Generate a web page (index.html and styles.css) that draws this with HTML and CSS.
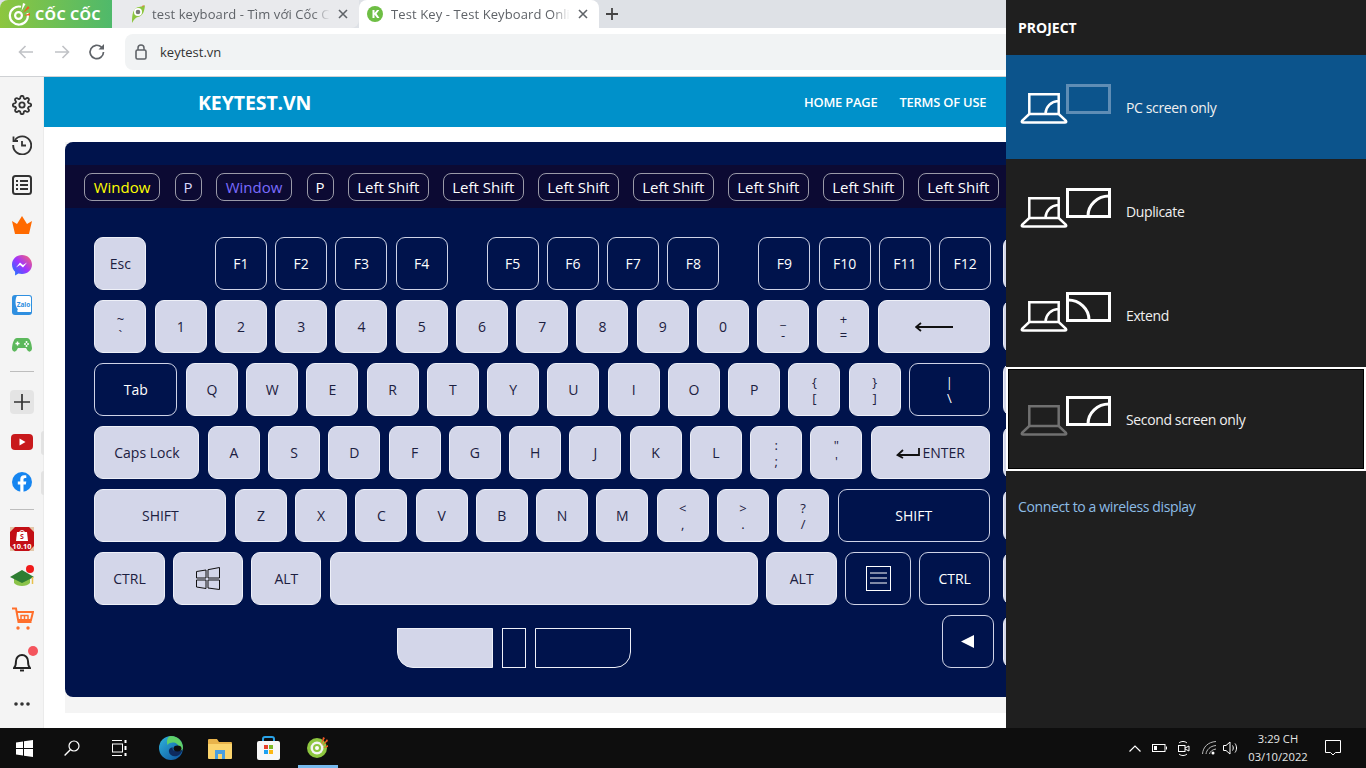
FILE: index.html
```html
<!DOCTYPE html>
<html lang="vi">
<head>
<meta charset="utf-8">
<title>Test Key</title>
<link rel="stylesheet" href="styles.css">
</head>
<body>
<div class="screen">
  <div class="browser">
    <div class="tabstrip">
      <div class="brand">
        <svg class="brand-logo" width="24" height="24" viewBox="0 0 24 24"><path d="M14 4.800A9 9 0 1 0 20.500 11" fill="none" stroke="#fff" stroke-width="2.200"/><circle cx="11.500" cy="13.500" r="3.400" fill="none" stroke="#fff" stroke-width="2.200"/><path d="M14.500 9l1.500-8 2.500 1z" fill="#fff"/><path d="M16 11l5-7 1.500 2z" fill="#f15a24"/><path d="M17 13.500l6-2.500v2.500z" fill="#f15a24"/></svg>
        <span class="brand-text">CỐC CỐC</span>
      </div>
      <div class="tab tab-idle">
        <svg class="tab-ico" width="18" height="20" viewBox="0 0 18 20"><path d="M3 19C3 10 4 4 10 3c3-.5 5-1 6-2-.5 6-2 11-7 12-2 .5-4 2-6 6z" fill="#8dc63f"/><circle cx="9" cy="8" r="4" fill="#fff"/><circle cx="9" cy="8" r="2.300" fill="#777"/><path d="M13 3l1-2 1 1z" fill="#f15a24"/></svg>
        <span class="tab-title">test keyboard - Tìm với Cốc C</span>
        <svg class="tab-x" width="10" height="10" viewBox="0 0 10 10"><path d="M1 1l8 8M9 1l-8 8" stroke="#5f6368" stroke-width="1.600"/></svg>
      </div>
      <div class="tab tab-on">
        <svg class="tab-ico" width="16" height="16" viewBox="0 0 16 16"><circle cx="8" cy="8" r="8" fill="#6ebe44"/><path d="M5.500 4h2v3l2.500-3h2.300L9.500 7.800l3 4.200h-2.400L7.500 8.500V12h-2z" fill="#fff"/></svg>
        <span class="tab-title">Test Key - Test Keyboard Onli</span>
        <svg class="tab-x" width="10" height="10" viewBox="0 0 10 10"><path d="M1 1l8 8M9 1l-8 8" stroke="#5f6368" stroke-width="1.600"/></svg>
      </div>
      <svg class="tab-plus" width="12" height="12" viewBox="0 0 12 12"><path d="M6 0v12M0 6h12" stroke="#444" stroke-width="1.800"/></svg>
    </div>
    <div class="toolbar">
      <svg width="16" height="14" viewBox="0 0 16 14"><path d="M15 7H2M7.500 1L1.500 7l6 6" fill="none" stroke="#c0c2c6" stroke-width="1.600"/></svg>
      <svg width="16" height="14" viewBox="0 0 16 14"><path d="M1 7h13M8.500 1l6 6-6 6" fill="none" stroke="#c0c2c6" stroke-width="1.600"/></svg>
      <svg class="reload" width="18" height="18" viewBox="0 0 18 18"><path d="M15.500 9A6.700 6.700 0 1 1 13.500 4.200" fill="none" stroke="#5f6368" stroke-width="1.700"/><path d="M16 1v5.500h-5.500z" fill="#5f6368"/></svg>
      <div class="address">
        <svg width="12" height="16" viewBox="0 0 12 16"><rect x="1" y="6" width="10" height="9" rx="1.500" fill="none" stroke="#5f6368" stroke-width="1.600"/><path d="M3 6V4a3 3 0 0 1 6 0v2" fill="none" stroke="#5f6368" stroke-width="1.500"/></svg>
        <span class="url">keytest.vn</span>
      </div>
    </div>
    <div class="view">
      <aside class="sidebar">
        <svg class="s-ico" width="20" height="20" viewBox="0 0 24 24"><circle cx="12" cy="12" r="3.200" fill="none" stroke="#333" stroke-width="2.200"/><path d="M19.400 15a1.650 1.650 0 0 0 .33 1.820l.06.06a2 2 0 0 1 0 2.830 2 2 0 0 1-2.830 0l-.06-.06a1.650 1.650 0 0 0-1.820-.33 1.650 1.650 0 0 0-1 1.510V21a2 2 0 0 1-2 2 2 2 0 0 1-2-2v-.09A1.650 1.650 0 0 0 9 19.400a1.650 1.650 0 0 0-1.820.33l-.06.06a2 2 0 0 1-2.830 0 2 2 0 0 1 0-2.830l.06-.06a1.650 1.650 0 0 0 .33-1.820 1.650 1.650 0 0 0-1.510-1H3a2 2 0 0 1-2-2 2 2 0 0 1 2-2h.09A1.650 1.650 0 0 0 4.600 9a1.650 1.650 0 0 0-.33-1.820l-.06-.06a2 2 0 0 1 0-2.830 2 2 0 0 1 2.830 0l.06.06a1.650 1.650 0 0 0 1.820.33H9a1.650 1.650 0 0 0 1-1.510V3a2 2 0 0 1 2-2 2 2 0 0 1 2 2v.09a1.650 1.650 0 0 0 1 1.510 1.650 1.650 0 0 0 1.820-.33l.06-.06a2 2 0 0 1 2.830 0 2 2 0 0 1 0 2.830l-.06.06a1.650 1.650 0 0 0-.33 1.820V9a1.650 1.650 0 0 0 1.510 1H21a2 2 0 0 1 2 2 2 2 0 0 1-2 2h-.09a1.650 1.650 0 0 0-1.510 1z" fill="none" stroke="#333" stroke-width="2.200"/></svg>
        <svg class="s-ico" width="20" height="20" viewBox="0 0 20 20"><path d="M3 5A9 9 0 1 1 1.200 10" fill="none" stroke="#333" stroke-width="1.900"/><path d="M1.500 1.500V6h4.500" fill="none" stroke="#333" stroke-width="1.800"/><path d="M10 6v4.500h4" fill="none" stroke="#333" stroke-width="1.800"/></svg>
        <svg class="s-ico" width="20" height="20" viewBox="0 0 20 20"><rect x="1" y="1" width="18" height="18" rx="2.500" fill="none" stroke="#333" stroke-width="2"/><path d="M8 6h8M8 10h8M8 14h8" stroke="#333" stroke-width="1.800"/><path d="M4 6h2M4 10h2M4 14h2" stroke="#333" stroke-width="1.800"/></svg>
        <svg class="s-ico" width="20" height="20" viewBox="0 0 20 20"><path d="M3 19L0 6l5 3 5-8 5 8 5-3-3 13z" fill="#ff6a00"/></svg>
        <svg class="s-ico" width="20" height="21" viewBox="0 0 20 21"><defs><linearGradient id="mg" x1="0" y1="1" x2="1" y2="0"><stop offset="0" stop-color="#0a7cff"/><stop offset=".5" stop-color="#a033ff"/><stop offset="1" stop-color="#ff6968"/></linearGradient></defs><path d="M10 0C4.400 0 0 4.100 0 9.600c0 2.900 1.200 5.400 3.100 7.100V20.500l3.300-1.900c1.100.3 2.300.5 3.600.5 5.600 0 10-4.100 10-9.500S15.600 0 10 0z" fill="url(#mg)"/><path d="M4 12.500l4-5 3 2.500 4-2.500-4 5-3-2.500z" fill="#fff"/></svg>
        <svg class="s-ico" width="20" height="20" viewBox="0 0 20 20"><rect width="20" height="20" rx="3" fill="#2f8fe0"/><path d="M5 1h12a2 2 0 0 1 2 2v14H6a3 3 0 0 1-1-1c1-1 1-2 0-3C3 11 3 3 5 1z" fill="#fff"/><text class="zalo-text" x="11.500" y="11.500" text-anchor="middle">Zalo</text></svg>
        <svg class="s-ico" width="20" height="20" viewBox="0 0 20 16"><path d="M5 1h10c3 0 4.500 5 5 10 .2 3-2.500 5-4.500 2.500L14 11H6l-1.500 2.500C2.500 16 -.2 14 0 11 .5 6 2 1 5 1z" fill="#5cb85c"/><path d="M3.500 6.500h4M5.500 4.500v4" stroke="#fff" stroke-width="1.400"/><circle cx="13" cy="7" r="1" fill="#fff"/><circle cx="16" cy="7" r="1" fill="#fff"/><circle cx="14.500" cy="5" r="1" fill="#fff"/><circle cx="14.500" cy="9" r="1" fill="#fff"/></svg>
        <div class="s-rule s-rule-a"></div>
        <div class="s-plus"><svg width="16" height="16" viewBox="0 0 16 16"><path d="M8 0v16M0 8h16" stroke="#333" stroke-width="1.700"/></svg></div>
        <svg class="s-ico" width="22" height="16" viewBox="0 0 22 16"><rect width="22" height="16" rx="4" fill="#c8191c"/><path d="M8.500 4.500v7l6-3.500z" fill="#fff"/></svg>
        <svg class="s-ico" width="20" height="20" viewBox="0 0 20 20"><circle cx="10" cy="10" r="10" fill="#1685f0"/><path d="M8.300 20v-7.500H5.800V9.500h2.500V7.300c0-2.600 1.500-4 3.800-4 1.100 0 2.200.2 2.200.2v2.500h-1.200c-1.200 0-1.600.8-1.600 1.600v1.900h2.800l-.5 3h-2.300V20z" fill="#fff"/></svg>
        <div class="s-rule s-rule-b"></div>
        <svg class="s-ico" width="24" height="24" viewBox="0 0 24 24"><rect width="24" height="24" fill="#c30f16"/><path d="M0 0l5 0-5 5zM24 0v5l-5-5zM0 24v-5l5 5zM24 24h-5l5-5z" fill="#e3c6a8"/><path d="M7 5h10l1 9H6z" fill="#fff"/><path d="M9.500 6a2.500 2.500 0 0 1 5 0" fill="none" stroke="#fff"/><text class="shopee-s" x="12" y="12" text-anchor="middle">S</text><text class="shopee-t" x="12" y="21.500" text-anchor="middle">10.10</text></svg>
        <div class="s-badged s-grad">
          <svg width="25" height="20" viewBox="0 0 25 20"><path d="M4 9v6c3 4 13 4 16 0V9z" fill="#8bc34a"/><path d="M0 9l12-7 12 7-12 6z" fill="#2e7d32"/><path d="M22.500 9v7" stroke="#e8c14a" stroke-width="1.500"/></svg>
          <span class="dot dot-grad"></span>
        </div>
        <svg class="s-ico" width="23" height="23" viewBox="0 0 23 23"><path d="M1 1.500h4l2.500 13.500h13" fill="none" stroke="#ff6f2c" stroke-width="2"/><path d="M5.500 5H22l-2 8H7" fill="none" stroke="#ff6f2c" stroke-width="2"/><path d="M10 12V8.500h7.500M13.500 8.500V12M17 8.500V12" fill="none" stroke="#ff6f2c" stroke-width="1.500"/><circle cx="7" cy="21" r="1.700" fill="#ff6f2c"/><circle cx="17" cy="21" r="1.700" fill="#ff6f2c"/></svg>
        <div class="s-badged s-bell">
          <svg width="18" height="20" viewBox="0 0 18 20"><path d="M1 16c2-2 2-4 2-7a6 6 0 0 1 12 0c0 3 0 5 2 7z" fill="none" stroke="#222" stroke-width="1.900"/><path d="M7 18.500h4" stroke="#222" stroke-width="1.900"/></svg>
          <span class="dot dot-bell"></span>
        </div>
        <svg class="s-dots" width="16" height="4" viewBox="0 0 16 4"><circle cx="2" cy="2" r="1.800" fill="#333"/><circle cx="8" cy="2" r="1.800" fill="#333"/><circle cx="14" cy="2" r="1.800" fill="#333"/></svg>
        <span class="grip grip-a"></span>
        <span class="grip grip-b"></span>
      </aside>
      <main class="page">
        <header class="site-head">
          <div class="site-name">KEYTEST.VN</div>
          <nav class="site-nav"><span>HOME PAGE</span><span>TERMS OF USE</span></nav>
        </header>
        <div class="board-wrap">
          <section class="board">
            <div class="history">
              <span class="chip chip-yellow">Window</span><span class="chip chip-lav">P</span><span class="chip chip-violet">Window</span><span class="chip">P</span><span class="chip">Left Shift</span><span class="chip">Left Shift</span><span class="chip">Left Shift</span><span class="chip">Left Shift</span><span class="chip">Left Shift</span><span class="chip">Left Shift</span><span class="chip">Left Shift</span>
            </div>
            <div class="keys">
              <div class="row">
                <div class="key">Esc</div>
                <div class="key dark gap-a">F1</div><div class="key dark">F2</div><div class="key dark">F3</div><div class="key dark">F4</div>
                <div class="key dark gap-b">F5</div><div class="key dark">F6</div><div class="key dark">F7</div><div class="key dark">F8</div>
                <div class="key dark gap-b">F9</div><div class="key dark">F10</div><div class="key dark">F11</div><div class="key dark">F12</div>
                <div class="key stub-a"></div>
              </div>
              <div class="row">
                <div class="key two"><span>~</span><span>`</span></div>
                <div class="key">1</div><div class="key">2</div><div class="key">3</div><div class="key">4</div><div class="key">5</div><div class="key">6</div><div class="key">7</div><div class="key">8</div><div class="key">9</div><div class="key">0</div>
                <div class="key two"><span>_</span><span>-</span></div>
                <div class="key two"><span>+</span><span>=</span></div>
                <div class="key w-back"><svg width="38" height="10" viewBox="0 0 38 10"><path d="M38 5H1M6 1L1 5l5 4" fill="none" stroke="#111" stroke-width="1.800"/></svg></div>
                <div class="key stub-b"></div>
              </div>
              <div class="row">
                <div class="key dark w-tab">Tab</div>
                <div class="key">Q</div><div class="key">W</div><div class="key">E</div><div class="key">R</div><div class="key">T</div><div class="key">Y</div><div class="key">U</div><div class="key">I</div><div class="key">O</div><div class="key">P</div>
                <div class="key two"><span>{</span><span>[</span></div>
                <div class="key two"><span>}</span><span>]</span></div>
                <div class="key dark two w-pipe"><span>|</span><span>\</span></div>
                <div class="key stub-b"></div>
              </div>
              <div class="row">
                <div class="key w-caps">Caps Lock</div>
                <div class="key">A</div><div class="key">S</div><div class="key">D</div><div class="key">F</div><div class="key">G</div><div class="key">H</div><div class="key">J</div><div class="key">K</div><div class="key">L</div>
                <div class="key two"><span>:</span><span>;</span></div>
                <div class="key two"><span>"</span><span>'</span></div>
                <div class="key w-enter"><svg class="enter-ico" width="24" height="12" viewBox="0 0 24 12"><path d="M23 1v7H2M7 3L1.500 8 7 11" fill="none" stroke="#111" stroke-width="1.800"/></svg>ENTER</div>
                <div class="key stub-b"></div>
              </div>
              <div class="row">
                <div class="key w-shift">SHIFT</div>
                <div class="key">Z</div><div class="key">X</div><div class="key">C</div><div class="key">V</div><div class="key">B</div><div class="key">N</div><div class="key">M</div>
                <div class="key two"><span>&lt;</span><span>,</span></div>
                <div class="key two"><span>&gt;</span><span>.</span></div>
                <div class="key two"><span>?</span><span>/</span></div>
                <div class="key dark w-rshift">SHIFT</div>
                <div class="key stub-b"></div>
              </div>
              <div class="row">
                <div class="key w-mod">CTRL</div>
                <div class="key w-mod"><svg width="24" height="23" viewBox="0 0 24 23"><path d="M.5 4.500L10 3v8H.5zM12 2.700L23.500.5V11H12zM.5 13H10v8.500L.5 20zM12 13h11.500v9.500L12 21z" fill="none" stroke="#111" stroke-width="1"/></svg></div>
                <div class="key w-mod">ALT</div>
                <div class="key w-space"></div>
                <div class="key w-ralt">ALT</div>
                <div class="key dark w-menu"><svg width="25" height="25" viewBox="0 0 25 25"><rect x=".5" y=".5" width="24" height="24" fill="none" stroke="#fff"/><path d="M4 7h17M4 12h17M4 17h17" stroke="#fff"/></svg></div>
                <div class="key dark w-rctrl">CTRL</div>
                <div class="key stub-b"></div>
              </div>
              <div class="row row-last">
                <div class="pad pad-l"></div>
                <div class="pad pad-m"></div>
                <div class="pad pad-r"></div>
                <div class="key dark arrow-key"><svg width="13" height="13" viewBox="0 0 13 13"><path d="M13 0v13L0 6.500z" fill="#fff"/></svg></div>
                <div class="key stub-c"></div>
              </div>
            </div>
          </section>
        </div>
      </main>
    </div>
  </div>
  <footer class="taskbar">
    <svg class="t-start" width="17" height="17" viewBox="0 0 17 17"><path d="M0 2.400L7 1.400V8H0zM8 1.300L17 0v8H8zM0 9h7v6.600L0 14.600zM8 9h9v8L8 15.700z" fill="#fff"/></svg>
    <svg class="t-search" width="16" height="16" viewBox="0 0 16 16"><circle cx="10" cy="6" r="5" fill="none" stroke="#fff" stroke-width="1.200"/><path d="M6.300 9.700L.6 15.400" stroke="#fff" stroke-width="1.400"/></svg>
    <svg class="t-view" width="17" height="16" viewBox="0 0 17 16"><path d="M0 .5h10M0 15.500h10" stroke="#fff"/><rect x=".5" y="4" width="10" height="8" fill="none" stroke="#fff"/><path d="M13.500 0v3M13.500 6v4M13.500 13v3" stroke="#fff" stroke-width="2"/></svg>
    <svg class="t-edge" width="24" height="24" viewBox="0 0 24 24"><defs><linearGradient id="eg" x1="0" y1="0" x2="1" y2="1"><stop offset="0" stop-color="#2fb4dc"/><stop offset="1" stop-color="#0c4f9c"/></linearGradient></defs><circle cx="12" cy="12" r="12" fill="url(#eg)"/><path d="M12 0c7 0 12 5 12 12 0 2-1 3.500-2.500 4-1.500-3-1-6-3.500-8s-7-2-9.500 1C7 4 9 0 12 0z" fill="#5fd068"/><path d="M24 13c-1 1-3 2-7 2-3 0-4-2-3-3.500-3 0-4.500 2-4 4.500.5 3 4 5 8 4 3-1 5-4 6-7z" fill="#0e2a5e"/><ellipse cx="18.500" cy="12.500" rx="4" ry="3" fill="#0e0e0e"/></svg>
    <svg class="t-folder" width="24" height="21" viewBox="0 0 24 21"><path d="M0 2a1 1 0 0 1 1-1h8l2 3h12a1 1 0 0 1 1 1v15H0z" fill="#e8b34b"/><path d="M0 6h24v14a1 1 0 0 1-1 1H1a1 1 0 0 1-1-1z" fill="#fbd46d"/><path d="M7 12h10v9h-3v-5h-4v5H7z" fill="#4a9fe0"/></svg>
    <svg class="t-store" width="23" height="24" viewBox="0 0 23 24"><path d="M6 6V3a2 2 0 0 1 2-2h7a2 2 0 0 1 2 2v3" fill="none" stroke="#2aa3e8" stroke-width="2"/><rect y="5" width="23" height="19" rx="2" fill="#f7f7f7"/><rect x="7" y="9" width="4" height="4" fill="#e8402a"/><rect x="12" y="9" width="4" height="4" fill="#7cb927"/><rect x="7" y="14" width="4" height="4" fill="#1da1f2"/><rect x="12" y="14" width="4" height="4" fill="#fdb813"/></svg>
    <div class="t-coc">
      <svg width="22" height="22" viewBox="0 0 22 22"><circle cx="10" cy="12" r="10" fill="#8dc63f"/><circle cx="10" cy="12" r="6.500" fill="#f4f4f4"/><circle cx="10" cy="12" r="4" fill="#8dc63f"/><circle cx="10" cy="12" r="2" fill="#fff"/><path d="M14 9l2-8 2 1zM15 10l5-7 1 2zM16 12l5-3v2z" fill="#f15a24"/></svg>
    </div>
    <div class="tray">
      <svg width="12" height="7" viewBox="0 0 12 7"><path d="M.5 6.500L6 1l5.500 5.500" fill="none" stroke="#fff" stroke-width="1.200"/></svg>
      <svg class="tr-batt" width="15" height="8" viewBox="0 0 15 8"><rect x=".5" y=".5" width="12.500" height="7" fill="none" stroke="#fff"/><rect x="2" y="2" width="3" height="4" fill="#fff"/><path d="M14.500 2.500v3" stroke="#fff"/></svg>
      <svg class="tr-meet" width="12" height="17" viewBox="0 0 12 17"><path d="M1 3c2-2 6-2 8 0M1 14c2 2 6 2 8 0" fill="none" stroke="#fff"/><rect x=".5" y="5.500" width="6.500" height="6" fill="none" stroke="#fff"/><path d="M7 8l4-2v5l-4-2" fill="none" stroke="#fff"/></svg>
      <svg class="tr-wifi" width="15" height="14" viewBox="0 0 15 14"><path d="M.5 13C1 6 6 1 14 .5M4 13c.5-4 4-8 10-8.500M7.500 13c.3-2 2.500-4.500 6.500-5" fill="none" stroke="#bbb"/><circle cx="11" cy="12" r="1.500" fill="#fff"/></svg>
      <svg class="tr-vol" width="16" height="14" viewBox="0 0 16 14"><path d="M.5 4.500h2.500L7 1v12L3 9.500H.5z" fill="none" stroke="#fff"/><path d="M9.500 4.500c1 1.500 1 3.500 0 5M12 2.500c2 2.500 2 6.500 0 9" fill="none" stroke="#fff"/></svg>
      <div class="clock"><span>3:29 CH</span><span>03/10/2022</span></div>
      <svg class="tr-note" width="16" height="16" viewBox="0 0 16 16"><path d="M.5.500h15v12h-5L8 15l-2.500-2.500h-5z" fill="none" stroke="#fff"/></svg>
    </div>
  </footer>
  <aside class="project">
    <h1 class="project-title">PROJECT</h1>
    <div class="mode mode-on">
      <svg class="mode-ico" width="92" height="42" viewBox="0 0 92 42"><rect x="47.500" y="2.500" width="42" height="27" fill="none" stroke="#5f8db5" stroke-width="3"/><path d="M9.300 31V11.300h29.400V31M9.300 31l-7 6.500q-1.500 2 1 2h41.400q2.500 0 1-2l-7-6.500zM25.500 30.500A13.500 13 0 0 1 38 18" fill="none" stroke="#fff" stroke-width="2.500"/></svg>
      <span>PC screen only</span>
    </div>
    <div class="mode">
      <svg class="mode-ico" width="92" height="42" viewBox="0 0 92 42"><rect x="47.500" y="2.500" width="42" height="27" fill="none" stroke="#fff" stroke-width="3"/><path d="M68 29A21 20 0 0 1 89 9" fill="none" stroke="#fff" stroke-width="3"/><path d="M9.300 31V11.300h29.400V31M9.300 31l-7 6.500q-1.500 2 1 2h41.400q2.500 0 1-2l-7-6.500zM25.500 30.500A13.500 13 0 0 1 38 18" fill="none" stroke="#fff" stroke-width="2.500"/></svg>
      <span>Duplicate</span>
    </div>
    <div class="mode">
      <svg class="mode-ico" width="92" height="42" viewBox="0 0 92 42"><rect x="47.500" y="2.500" width="42" height="27" fill="none" stroke="#fff" stroke-width="3"/><path d="M48 9A21 20 0 0 1 69 29" fill="none" stroke="#fff" stroke-width="3"/><path d="M9.300 31V11.300h29.400V31M9.300 31l-7 6.500q-1.500 2 1 2h41.400q2.500 0 1-2l-7-6.500zM25.500 30.500A13.500 13 0 0 1 38 18" fill="none" stroke="#fff" stroke-width="2.500"/></svg>
      <span>Extend</span>
    </div>
    <div class="mode mode-focus">
      <svg class="mode-ico" width="92" height="42" viewBox="0 0 92 42"><rect x="47.500" y="2.500" width="42" height="27" fill="none" stroke="#fff" stroke-width="3"/><path d="M68 29A21 20 0 0 1 89 9" fill="none" stroke="#fff" stroke-width="3"/><path d="M9.300 31V11.300h29.400V31M9.300 31l-7 6.500q-1.500 2 1 2h41.400q2.500 0 1-2l-7-6.500z" fill="none" stroke="#707070" stroke-width="2.500"/></svg>
      <span>Second screen only</span>
    </div>
    <div class="project-link">Connect to a wireless display</div>
  </aside>
</div>
</body>
</html>
```
FILE: styles.css
```css
* { box-sizing: border-box; }
html, body { margin: 0; height: 100%; }
body { font-family: "Open Sans", "Noto Sans", "Liberation Sans", sans-serif; overflow: hidden; background: #fff; }
svg { display: block; flex: none; }
.screen { position: relative; width: 1366px; height: 768px; display: flex; flex-direction: column; overflow: hidden; }
.browser { flex: 1; min-height: 0; display: flex; flex-direction: column; }

.tabstrip { height: 28px; flex: none; background: #dee1e6; display: flex; align-items: stretch; }
.brand { width: 112px; flex: none; display: flex; align-items: center; gap: 4px; padding-left: 7px; background: linear-gradient(90deg, #8dc63f, #4fb96b); border-radius: 8px 0 0 0; }
.brand-text { font: 700 14.500px "Open Sans", sans-serif; color: #fff; letter-spacing: .3px; white-space: nowrap; }
.tab { display: flex; align-items: center; font-size: 13px; color: #5f6368; }
.tab-idle { width: 247px; padding: 0 12px 0 17px; background: #e9eaed; border-radius: 0 0 8px 0; }
.tab-on { width: 240px; padding: 0 12px 0 8px; background: #fff; border-radius: 8px 8px 0 0; }
.tab-title { flex: 1; white-space: nowrap; letter-spacing: .1px; -webkit-mask-image: linear-gradient(90deg, #000 90%, transparent); mask-image: linear-gradient(90deg, #000 90%, transparent); }
.tab-idle .tab-title { margin-left: 5px; }
.tab-on .tab-title { margin-left: 8px; }
.tab-x { margin-left: 8px; }
.tab-plus { align-self: center; margin-left: 7px; }

.toolbar { height: 49px; flex: none; display: flex; align-items: center; padding: 0 0 1px 18px; gap: 20px; background: #fff; border-bottom: 1px solid #cfd1d4; }
.reload { margin-left: -2px; }
.address { flex: 1; height: 36px; margin-left: -1px; display: flex; align-items: center; gap: 13px; padding-left: 10px; background: #f1f3f4; border-radius: 8px 0 0 8px; }
.url { font-size: 13px; color: #333; }

.view { flex: 1; min-height: 0; display: flex; }
.sidebar { position: relative; width: 44px; flex: none; background: #f4f4f4; border-right: 1px solid #ebebeb; display: flex; flex-direction: column; align-items: center; padding-left: 1px; padding-top: 18px; }
.s-ico:nth-child(1) { margin-bottom: 20px; }
.s-ico:nth-child(2) { margin-bottom: 20px; }
.s-ico:nth-child(3) { margin-bottom: 20px; }
.s-ico:nth-child(4) { margin-bottom: 20px; }
.s-ico:nth-child(5) { margin-bottom: 19px; }
.s-ico:nth-child(6) { margin-bottom: 20px; }
.s-ico:nth-child(7) { margin-bottom: 16px; }
.s-rule { width: 24px; height: 1px; background: #bdbdbd; flex: none; }
.s-rule-a { margin-bottom: 18px; }
.s-rule-b { margin-bottom: 17px; }
.s-plus { width: 24px; height: 24px; flex: none; border-radius: 4px; background: #e4e4e4; display: flex; align-items: center; justify-content: center; margin-bottom: 20px; }
.s-ico:nth-child(10) { margin-bottom: 22px; }
.s-ico:nth-child(11) { margin-bottom: 17px; }
.s-ico:nth-child(13) { margin-bottom: 17px; }
.s-badged { position: relative; flex: none; }
.s-grad { margin-bottom: 19px; }
.s-bell { margin-bottom: 30px; }
.s-ico:nth-child(15) { margin-bottom: 22px; }
.dot { position: absolute; border-radius: 50%; }
.dot-grad { width: 8px; height: 8px; right: 1px; top: -3px; background: #f01a1a; }
.dot-bell { width: 10px; height: 10px; right: -7px; top: -6px; background: #f4555d; }
.zalo-text { font: 700 6.500px "Open Sans", sans-serif; fill: #2f8fe0; }
.shopee-s { font: 700 7px "Open Sans", sans-serif; fill: #c30f16; }
.shopee-t { font: 700 7.500px "Open Sans", sans-serif; fill: #fff; }
.grip { position: absolute; right: -1px; width: 3px; height: 24px; background: #e2e2e2; border-radius: 3px 0 0 3px; }
.grip-a { top: 354px; }
.grip-b { top: 394px; }

.page { flex: 1; min-width: 0; overflow: hidden; background: #fff; display: flex; flex-direction: column; }
.site-head { height: 50px; flex: none; background: #0091ca; color: #fff; display: flex; align-items: center; padding-left: 154px; }
.site-name { width: 606px; padding-top: 1px; font-size: 19.500px; font-weight: 700; letter-spacing: -.1px; }
.site-nav { display: flex; gap: 22px; font-size: 12.900px; font-weight: 600; white-space: nowrap; letter-spacing: -.2px; }
.board-wrap { flex: 1; min-height: 0; margin: 15px 0 15px 21px; background: #f4f4f4; }
.board { width: 1280px; height: 555px; background: #00134c; border-radius: 8px; padding-top: 23px; }
.history { height: 43px; display: flex; align-items: center; gap: 14.500px; padding-left: 19px; background: #0c0a33; }
.chip { height: 28px; flex: none; padding: 0 4px; min-width: 27px; display: flex; align-items: center; justify-content: center; border: 1px solid #9a9aa8; border-radius: 8px; color: #fff; font-size: 15px; white-space: nowrap; }
.chip:nth-child(n+5) { width: 80.500px; }
.chip-yellow { width: 76px; color: #ffff00; }
.chip-violet { width: 76px; color: #7a6cff; }
.chip-lav { color: #d9d9ff; }

.keys { padding: 29px 0 0 29.400px; display: flex; flex-direction: column; gap: 10px; }
.row { display: flex; gap: 8.250px; height: 53px; flex: none; }
.key { width: 52px; flex: none; display: flex; align-items: center; justify-content: center; font-size: 14px; color: #1c2040; background: #d3d6e9; border: 1px solid #eef0f8; border-radius: 9px; }
.key.dark { background: #00134c; color: #fff; border-color: #cfd3e6; }
.two { flex-direction: column; font-size: 13px; line-height: 16px; }
.gap-a { margin-left: 60.250px; }
.gap-b { margin-left: 30.750px; }
.stub-a { margin-left: 3.250px; }
.stub-b { margin-left: 4.750px; }
.stub-c { margin-left: 0.750px; }
.w-back { width: 112.250px; }
.w-tab { width: 83px; margin-right: .250px; }
.w-pipe { width: 81px; }
.w-caps { width: 105px; margin-right: .250px; }
.w-enter { width: 119.250px; gap: 3px; }
.enter-ico { margin-top: 1px; }
.w-shift { width: 132px; margin-right: .250px; }
.w-rshift { width: 152.300px; margin-left: .200px; }
.w-mod { width: 70.200px; }
.w-space { width: 428.500px; }
.w-ralt { width: 70.500px; }
.w-menu { width: 66px; }
.w-rctrl { width: 70.500px; }
.row-last { align-items: flex-end; }
.pad { height: 40px; flex: none; border: 1px solid #eef0f8; }
.pad-l { width: 96px; margin-left: 302.500px; background: #d3d6e9; border-radius: 0 0 0 16px; }
.pad-m { width: 24px; margin-left: .750px; }
.pad-r { width: 96px; margin-left: .750px; border-radius: 0 0 16px 0; }
.row-last .key { height: 53px; }
.arrow-key { margin-left: 302.750px; }

.taskbar { height: 40px; flex: none; display: flex; align-items: center; background: #0e0e0e; color: #fff; padding-left: 16px; }
.t-search { margin-left: 31px; }
.t-view { margin-left: 32px; }
.t-edge { margin-left: 30px; }
.t-folder { margin-left: 25px; }
.t-store { margin-left: 25px; }
.t-coc { align-self: stretch; width: 40px; margin-left: 18px; display: flex; align-items: center; justify-content: center; border-bottom: 3px solid #76b9ed; }
.tray { margin-left: auto; display: flex; align-items: center; padding-right: 25px; }
.tr-batt { margin-left: 11px; }
.tr-meet { margin-left: 11px; }
.tr-wifi { margin-left: 12px; }
.tr-vol { margin-left: 6px; }
.clock { width: 72px; margin-left: 3px; display: flex; flex-direction: column; align-items: center; font-size: 11.200px; line-height: 18.500px; color: #e6e6e6; }
.tr-note { margin-left: 11px; }

.project { position: absolute; left: 1006px; top: 0; width: 360px; height: 728px; background: #1f1f1f; color: #fff; display: flex; flex-direction: column; }
.project-title { margin: 0; height: 55px; padding-left: 12px; display: flex; align-items: center; font-size: 14px; font-weight: 700; }
.mode { height: 104px; flex: none; position: relative; padding: 28px 0 0 14px; display: flex; align-items: flex-start; font-size: 14px; color: #f0f0f0; }
.mode span { margin: 15px 0 0 14px; letter-spacing: -.37px; }
.mode-on { background: #0c548c; }
.mode-focus { border: 2px solid #fff; padding: 26px 0 0 12px; box-shadow: inset 0 0 0 1px #000; }
.project-link { margin: 26px 0 0 12px; font-size: 14px; letter-spacing: -.37px; color: #8dbde6; }
```
